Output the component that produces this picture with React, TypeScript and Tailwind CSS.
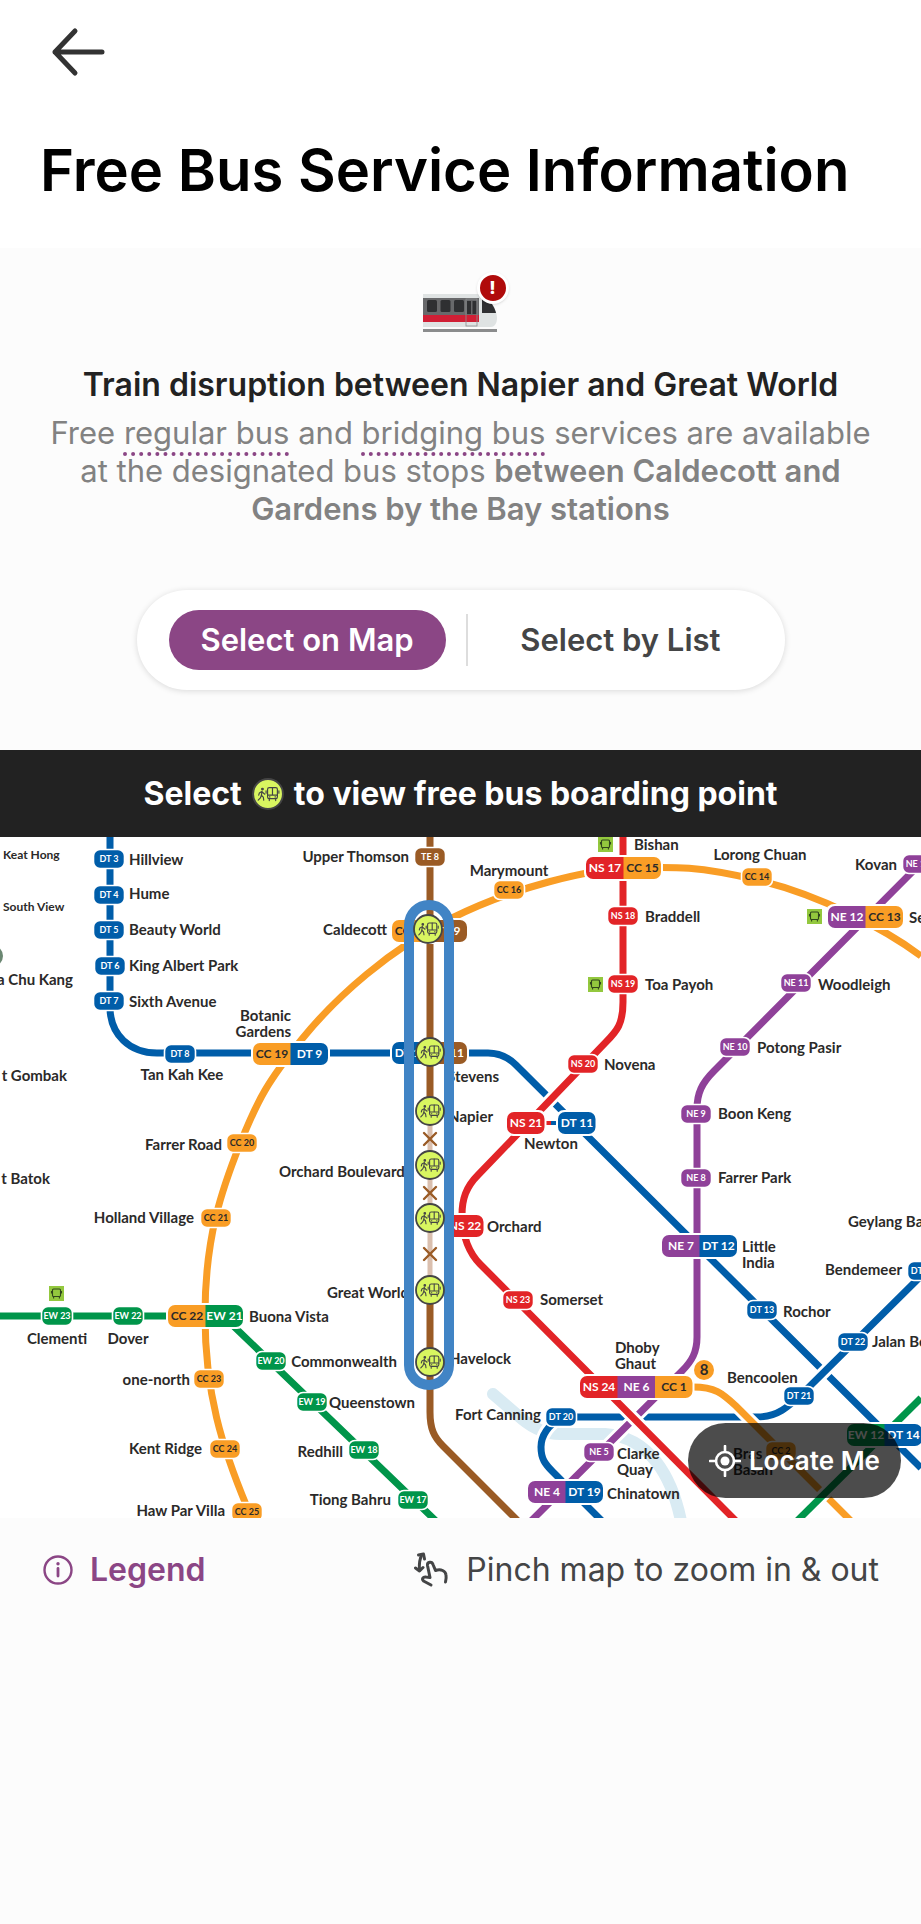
import { useState } from 'react';

const MAP_WIDTH = 921;
const MAP_HEIGHT = 681;

const BLUE = '#005da9';
const ORANGE = '#f99d25';
const GREEN = '#00954a';
const RED = '#e22427';
const PURPLE = '#8f4199';
const BROWN = '#9a5b25';
const DARK = '#2b2a29';

type Anchor = 'start' | 'middle' | 'end';

const lines = [
  { color: BLUE, d: 'M110 0 V170 C110 198 130 216 157 216 H488 C500 216 508 220 516 228 L921 631' },
  { color: BLUE, d: 'M921 439 L806 553 C790 568 779 580 757 580 H561 C546 590 541 600 541 610 C541 622 545 627 553 635 L602 684' },
  { color: GREEN, d: 'M0 479 H223 L436 684' },
  { color: ORANGE, d: 'M921 119 C885 92 820 58 757 43 S670 30 630 31 S514 50 452 81 S336 160 302 202 S258 262 240 307 S205 400 205 478 S222 610 247 670' },
  { color: ORANGE, d: 'M693 550 C715 550 722 556 736 569 L851 684' },
  { color: GREEN, d: 'M921 561 L797 684' },
  { color: PURPLE, d: 'M921 26 L714 234 C702 246 697 256 697 272 V500 C697 515 692 524 682 534 L530 685' },
  { color: RED, d: 'M623 0 V165 C623 187 617 194 606 205 L478 338 C466 350 462 362 462 378 C462 400 470 417 480 427 L737 685' },
  { color: BROWN, d: 'M430 0 V275' },
  { color: BROWN, d: 'M430 450 V575 C430 592 434 600 443 609 L518 684' },
];

const stations = [
  { x: 109, y: 22, code: 'DT 3', color: BLUE },
  { x: 109, y: 58, code: 'DT 4', color: BLUE },
  { x: 109, y: 93, code: 'DT 5', color: BLUE },
  { x: 110, y: 129, code: 'DT 6', color: BLUE },
  { x: 109, y: 164, code: 'DT 7', color: BLUE },
  { x: 180, y: 217, code: 'DT 8', color: BLUE },
  { x: 242, y: 306, code: 'CC 20', color: ORANGE },
  { x: 216, y: 381, code: 'CC 21', color: ORANGE },
  { x: 209, y: 542, code: 'CC 23', color: ORANGE },
  { x: 225, y: 612, code: 'CC 24', color: ORANGE },
  { x: 247, y: 675, code: 'CC 25', color: ORANGE },
  { x: 430, y: 20, code: 'TE 8', color: BROWN },
  { x: 509, y: 53, code: 'CC 16', color: ORANGE },
  { x: 757, y: 40, code: 'CC 14', color: ORANGE },
  { x: 781, y: 614, code: 'CC 2', color: ORANGE },
  { x: 623, y: 79, code: 'NS 18', color: RED },
  { x: 623, y: 147, code: 'NS 19', color: RED },
  { x: 583, y: 227, code: 'NS 20', color: RED },
  { x: 518, y: 463, code: 'NS 23', color: RED },
  { x: 918, y: 27, code: 'NE 13', color: PURPLE },
  { x: 796, y: 146, code: 'NE 11', color: PURPLE },
  { x: 735, y: 210, code: 'NE 10', color: PURPLE },
  { x: 696, y: 277, code: 'NE 9', color: PURPLE },
  { x: 696, y: 341, code: 'NE 8', color: PURPLE },
  { x: 599, y: 615, code: 'NE 5', color: PURPLE },
  { x: 57, y: 479, code: 'EW 23', color: GREEN },
  { x: 128, y: 479, code: 'EW 22', color: GREEN },
  { x: 271, y: 524, code: 'EW 20', color: GREEN },
  { x: 312, y: 565, code: 'EW 19', color: GREEN },
  { x: 364, y: 613, code: 'EW 18', color: GREEN },
  { x: 413, y: 663, code: 'EW 17', color: GREEN },
  { x: 561, y: 580, code: 'DT 20', color: BLUE },
  { x: 799, y: 559, code: 'DT 21', color: BLUE },
  { x: 853, y: 505, code: 'DT 22', color: BLUE },
  { x: 762, y: 473, code: 'DT 13', color: BLUE },
  { x: 923, y: 434, code: 'DT 23', color: BLUE },
];

// x is the left edge, every code takes 37.5 units of width
const interchanges = [
  { x: 253, y: 217, codes: [['CC 19', ORANGE], ['DT 9', BLUE]] },
  { x: 586, y: 31, codes: [['NS 17', RED], ['CC 15', ORANGE]] },
  { x: 828, y: 80, codes: [['NE 12', PURPLE], ['CC 13', ORANGE]] },
  { x: 392, y: 94, codes: [['CC 17', ORANGE], ['TE 9', BROWN]] },
  { x: 392, y: 216, codes: [['DT 10', BLUE], ['TE 11', BROWN]] },
  { x: 507, y: 286, codes: [['NS 21', RED]] },
  { x: 558, y: 286, codes: [['DT 11', BLUE]] },
  { x: 446, y: 389, codes: [['NS 22', RED]] },
  { x: 168, y: 479, codes: [['CC 22', ORANGE], ['EW 21', GREEN]] },
  { x: 662, y: 409, codes: [['NE 7', PURPLE], ['DT 12', BLUE]] },
  { x: 580, y: 550, codes: [['NS 24', RED], ['NE 6', PURPLE], ['CC 1', ORANGE]] },
  { x: 528, y: 655, codes: [['NE 4', PURPLE], ['DT 19', BLUE]] },
  { x: 847, y: 598, codes: [['EW 12', GREEN], ['DT 14', BLUE]] },
];

const names: { x: number; y: number; text: string[]; anchor?: Anchor }[] = [
  { x: 129, y: 28, text: ['Hillview'] },
  { x: 129, y: 62, text: ['Hume'] },
  { x: 129, y: 98, text: ['Beauty World'] },
  { x: 129, y: 134, text: ['King Albert Park'] },
  { x: 129, y: 170, text: ['Sixth Avenue'] },
  { x: 73, y: 148, text: ['a Chu Kang'], anchor: 'end' },
  { x: 67, y: 244, text: ['t Gombak'], anchor: 'end' },
  { x: 50, y: 347, text: ['t Batok'], anchor: 'end' },
  { x: 291, y: 184, text: ['Botanic', 'Gardens'], anchor: 'end' },
  { x: 182, y: 243, text: ['Tan Kah Kee'], anchor: 'middle' },
  { x: 222, y: 313, text: ['Farrer Road'], anchor: 'end' },
  { x: 194, y: 386, text: ['Holland Village'], anchor: 'end' },
  { x: 409, y: 25, text: ['Upper Thomson'], anchor: 'end' },
  { x: 387, y: 98, text: ['Caldecott'], anchor: 'end' },
  { x: 509, y: 39, text: ['Marymount'], anchor: 'middle' },
  { x: 499, y: 245, text: ['Stevens'], anchor: 'end' },
  { x: 493, y: 285, text: ['Napier'], anchor: 'end' },
  { x: 551, y: 312, text: ['Newton'], anchor: 'middle' },
  { x: 279, y: 340, text: ['Orchard Boulevard'] },
  { x: 634, y: 13, text: ['Bishan'] },
  { x: 760, y: 23, text: ['Lorong Chuan'], anchor: 'middle' },
  { x: 897, y: 33, text: ['Kovan'], anchor: 'end' },
  { x: 645, y: 85, text: ['Braddell'] },
  { x: 645, y: 153, text: ['Toa Payoh'] },
  { x: 604, y: 233, text: ['Novena'] },
  { x: 818, y: 153, text: ['Woodleigh'] },
  { x: 909, y: 86, text: ['Serangoon'] },
  { x: 757, y: 216, text: ['Potong Pasir'] },
  { x: 718, y: 282, text: ['Boon Keng'] },
  { x: 718, y: 346, text: ['Farrer Park'] },
  { x: 487, y: 395, text: ['Orchard'] },
  { x: 540, y: 468, text: ['Somerset'] },
  { x: 511, y: 527, text: ['Havelock'], anchor: 'end' },
  { x: 327, y: 461, text: ['Great World'] },
  { x: 249, y: 485, text: ['Buona Vista'] },
  { x: 397, y: 530, text: ['Commonwealth'], anchor: 'end' },
  { x: 329, y: 571, text: ['Queenstown'] },
  { x: 343, y: 620, text: ['Redhill'], anchor: 'end' },
  { x: 391, y: 668, text: ['Tiong Bahru'], anchor: 'end' },
  { x: 57, y: 507, text: ['Clementi'], anchor: 'middle' },
  { x: 128, y: 507, text: ['Dover'], anchor: 'middle' },
  { x: 190, y: 548, text: ['one-north'], anchor: 'end' },
  { x: 202, y: 617, text: ['Kent Ridge'], anchor: 'end' },
  { x: 225, y: 679, text: ['Haw Par Villa'], anchor: 'end' },
  { x: 541, y: 583, text: ['Fort Canning'], anchor: 'end' },
  { x: 615, y: 516, text: ['Dhoby', 'Ghaut'] },
  { x: 727, y: 546, text: ['Bencoolen'] },
  { x: 617, y: 622, text: ['Clarke', 'Quay'] },
  { x: 607, y: 662, text: ['Chinatown'] },
  { x: 733, y: 622, text: ['Bras', 'Basah'] },
  { x: 742, y: 415, text: ['Little', 'India'] },
  { x: 848, y: 390, text: ['Geylang Bahru'] },
  { x: 902, y: 438, text: ['Bendemeer'], anchor: 'end' },
  { x: 783, y: 480, text: ['Rochor'] },
  { x: 872, y: 510, text: ['Jalan Besar'] },
];

const boardingPoints = [
  { name: 'Caldecott', x: 428, y: 92 },
  { name: 'Stevens', x: 430, y: 215 },
  { name: 'Napier', x: 430, y: 274 },
  { name: 'Orchard Boulevard', x: 430, y: 328 },
  { name: 'Orchard', x: 430, y: 381 },
  { name: 'Great World', x: 430, y: 453 },
  { name: 'Havelock', x: 430, y: 525 },
];

const interchangeBuses = [
  { x: 598, y: 0 },
  { x: 588, y: 140 },
  { x: 807, y: 72 },
  { x: 49, y: 449 },
];

const BoardingIcon = ({ className }: { className: string }) => (
  <svg className={className} viewBox="0 0 30 30" fill="none" aria-hidden="true">
    <circle cx="15" cy="15" r="14" fill="#d9f660" stroke="#454545" strokeWidth="1.8" />
    <g stroke="#454545" strokeWidth="1.1" strokeLinecap="round" strokeLinejoin="round">
      <rect x="14.6" y="9" width="9.2" height="10.4" rx="1.6" />
      <path d="M14.6 16 H23.8 M19.2 9 V16 M16.2 19.600 V21.2 M22.2 19.600 V21.2 M13.2 12 V14.2 M25.2 12 V14.2 M16.4 17.7 H16.8 M21.600 17.7 H22" />
      <circle cx="9.8" cy="10.4" r="0.8" fill="#454545" />
      <path d="M9.4 12.6 L8.8 16.2 L10.6 18 L11 20.8 M8.8 16.2 L7.9 18.6 L5.8 20.8 M9.2 12.6 L6.9 14 L6.3 16 M9.8 13.4 L12 15.2" />
    </g>
  </svg>
);

const TrainIcon = () => (
  <svg className="h-16 w-24" viewBox="-2 0 96 64" fill="none" aria-hidden="true">
    <path d="M8 26 H64 C74 26 82 42 82 50 C82 56 79 59 76 59 H8 Z" fill="#dfe3e3" />
    <rect x="8" y="30" width="56" height="18" fill="#68696b" />
    <rect x="8" y="47" width="56" height="7" fill="#d01f35" />
    <g fill="#2f3032">
      <rect x="12" y="32" width="10" height="12" rx="1.5" />
      <rect x="25.500" y="32" width="10" height="12" rx="1.5" />
      <rect x="39" y="32" width="10" height="12" rx="1.5" />
      <rect x="52" y="33" width="4" height="13" />
      <rect x="57.500" y="33" width="4" height="13" />
      <path d="M67 31 H72 C77 34 80 41 81 45 H67 Z" />
    </g>
    <rect x="51" y="31" width="11" height="27" stroke="#8d8f91" strokeWidth="0.8" />
    <rect x="8" y="61" width="74" height="3" fill="#8b8c8d" />
  </svg>
);

const PinchIcon = () => (
  <svg className="h-10 w-9" viewBox="9 9 36 40" fill="none" stroke="#444546" strokeWidth="3" strokeLinecap="round" strokeLinejoin="round" aria-hidden="true">
    <path d="M17 13.500 C14.500 18 14 23 14.500 29" />
    <path d="M13.500 14 L18.500 13 L19.500 18" />
    <path d="M10.500 27 L14.500 30 L18 26.500" />
    <path d="M26 44 L18.500 40 C16.500 38 18 35.500 21 36 L25 36.500 L22.500 24.500 C22 20.500 27 20 28 23.500 L30.500 29.500 C36 27.500 40.500 30 41 34 C41.500 37 41 39 40.500 41" />
  </svg>
);

const StationLabel = ({ x, y, text, anchor = 'start' }: { x: number; y: number; text: string[]; anchor?: Anchor }) => (
  <text x={x} y={y} textAnchor={anchor}>
    {text.map((line, i) => (
      <tspan key={line} x={x} dy={i * 16}>
        {line}
      </tspan>
    ))}
  </text>
);

const TransitMap = () => (
  <svg
    className="block w-full font-[Lato,sans-serif] font-bold"
    viewBox={`0 0 ${MAP_WIDTH} ${MAP_HEIGHT}`}
    fill="none"
    role="img"
    aria-label="Train network map"
  >
    {/* River */}
    <path d="M493 557 L522 582 Q540 597 560 597 H605 C650 600 672 640 681 684" stroke="#d9ebf3" strokeWidth="12" strokeLinecap="round" />
    <circle cx="-8" cy="119" r="11" fill="#6b8772" />

    {/* Lines */}
    {lines.map((line) => (
      <g key={line.d}>
        <path d={line.d} stroke="#fff" strokeWidth="13" />
        <path d={line.d} stroke={line.color} strokeWidth="7" />
      </g>
    ))}
    <path d="M430 284 V444" stroke="#dabfae" strokeWidth="5" />
    <path d="M544 286 H551" stroke={RED} strokeWidth="4" />
    <path d="M551 286 H560" stroke={BLUE} strokeWidth="4" />
    {[302, 356, 417].map((y) => (
      <path key={y} d={`M424 ${y - 6} L436 ${y + 6} M436 ${y - 6} L424 ${y + 6}`} stroke={BROWN} strokeWidth="2.4" strokeLinecap="round" />
    ))}

    {/* Station names */}
    <g className="text-[15px]" fill={DARK}>
      {names.map((name) => (
        <StationLabel key={name.text[0] + name.x} {...name} />
      ))}
    </g>
    <g className="text-[12px]" fill={DARK}>
      <text x="3" y="22">Keat Hong</text>
      <text x="3" y="74">South View</text>
    </g>

    {/* Station codes */}
    <g className="text-[9px]" textAnchor="middle">
      {stations.map(({ x, y, code, color }) => (
        <g key={code}>
          <rect x={x - 15.5} y={y - 9.5} width="31" height="19" rx="6.5" fill={color} stroke="#fff" strokeWidth="1.6" />
          <text x={x} y={y + 3} fill={color === ORANGE ? DARK : '#fff'}>{code}</text>
        </g>
      ))}
    </g>
    <g className="text-[12px]" textAnchor="middle">
      {interchanges.map(({ x, y, codes }) => {
        const width = codes.length * 37.5;
        const id = `clip-${x}-${y}`;
        return (
          <g key={id}>
            <clipPath id={id}>
              <rect x={x} y={y - 11} width={width} height="22" rx="7" />
            </clipPath>
            <rect x={x - 2} y={y - 13} width={width + 4} height="26" rx="8" fill="#fff" />
            <g clipPath={`url(#${id})`}>
              {codes.map(([code, color], i) => (
                <rect key={code} x={x + i * 37.5} y={y - 11} width="38" height="22" fill={color} />
              ))}
            </g>
            {codes.map(([code, color], i) => (
              <text key={code} x={x + 19 + i * 37.5} y={y + 4} fill={color === ORANGE ? DARK : '#fff'}>{code}</text>
            ))}
          </g>
        );
      })}
    </g>
    <circle cx="704" cy="533" r="10" fill={ORANGE} />
    <text className="text-[15px]" x="704" y="538" textAnchor="middle" fill={DARK}>8</text>

    {/* Bus interchanges */}
    {interchangeBuses.map(({ x, y }) => (
      <g key={`${x}-${y}`} transform={`translate(${x} ${y})`}>
        <rect width="15" height="15" fill="#93c83e" />
        <rect x="3.500" y="3" width="8" height="7.500" rx="1" stroke="#31471c" strokeWidth="1.1" />
        <path d="M2.500 5 V7.500 M12.500 5 V7.500 M4.600 10.500 V12.500 M10.400 10.500 V12.500" stroke="#31471c" strokeWidth="1.1" />
      </g>
    ))}

    {/* Affected stretch */}
    <rect x="409" y="68" width="40" height="480" rx="20" stroke="#4184c5" strokeWidth="10" />
  </svg>
);

const App = () => {
  const [view, setView] = useState('map');
  const [selected, setSelected] = useState('');

  const tabClass = (name: string) =>
    view === name ? 'bg-[#8b4685] text-white' : 'text-[#444546]';

  return (
    <div className="min-h-screen bg-[#fcfcfc] font-[Inter,sans-serif] text-[#222222]">
      <header className="bg-white px-10 pt-6 pb-[46px]">
        <button type="button" aria-label="Back" className="block px-2">
          <svg className="h-14 w-16" viewBox="0 0 64 56" fill="none" stroke="#333333" strokeWidth="5" strokeLinecap="round" strokeLinejoin="round" aria-hidden="true">
            <path d="M54 28 H7 M27 7 L7 28 L27 49" />
          </svg>
        </button>
        <h1 className="mt-[58px] text-[58px] leading-16 font-semibold text-black">
          Free Bus Service Information
        </h1>
      </header>

      <section className="flex flex-col items-center px-8 pt-5 pb-15 text-center">
        <div className="relative">
          <TrainIcon />
          <span className="absolute top-1 right-0 flex size-8 items-center justify-center rounded-full border-3 border-white bg-[#b00b0b] text-lg font-extrabold text-white shadow">
            !
          </span>
        </div>
        <h2 className="mt-8 text-[32px] leading-[42px] font-semibold">
          Train disruption between Napier and Great World
        </h2>
        <p className="mt-2 text-[31px] leading-[38px] text-[#828282]">
          Free{' '}
          <a href="#regular-bus" className="underline decoration-[#8b4685] decoration-dotted decoration-4 underline-offset-8 [text-decoration-skip-ink:none]">
            regular bus
          </a>{' '}
          and{' '}
          <a href="#bridging-bus" className="underline decoration-[#8b4685] decoration-dotted decoration-4 underline-offset-8 [text-decoration-skip-ink:none]">
            bridging bus
          </a>{' '}
          services are available
          <br />
          at the designated bus stops <b className="font-semibold">between Caldecott and</b>
          <br />
          <b className="font-semibold">Gardens by the Bay stations</b>
        </p>

        <div className="mt-[62px] flex h-[100px] w-[648px] max-w-full items-center justify-between rounded-full bg-white px-8 text-[31px] font-semibold shadow-[0_1px_6px_rgba(0,0,0,0.14)]">
          <button type="button" onClick={() => setView('map')} className={`h-[60px] rounded-full px-8 ${tabClass('map')}`}>
            Select on Map
          </button>
          <div className="h-13 w-0.5 bg-[#dddddd]" />
          <button type="button" onClick={() => setView('list')} className={`h-[60px] rounded-full px-8 ${tabClass('list')}`}>
            Select by List
          </button>
        </div>
      </section>

      <div className="flex h-[87px] items-center justify-center gap-[10px] bg-[#222222] text-[32px] font-bold text-white">
        Select
        <BoardingIcon className="size-8" />
        to view free bus boarding point
      </div>

      <div className="relative overflow-hidden bg-white">
        <TransitMap />
        {boardingPoints.map(({ name, x, y }) => (
          <button
            key={name}
            type="button"
            aria-label={`Boarding point at ${name}`}
            aria-pressed={selected === name}
            onClick={() => setSelected(name)}
            className="absolute -translate-x-1/2 -translate-y-1/2 rounded-full"
            style={{ left: `${(x / MAP_WIDTH) * 100}%`, top: `${(y / MAP_HEIGHT) * 100}%` }}
          >
            <BoardingIcon className="size-[30px]" />
          </button>
        ))}
        <button type="button" className="absolute right-5 bottom-5 flex h-[75px] items-center gap-2 rounded-full bg-black/70 px-[21px] text-[26px] font-semibold text-white">
          <svg className="size-8" viewBox="0 0 32 32" fill="none" stroke="currentColor" strokeWidth="2.600" strokeLinecap="round" aria-hidden="true">
            <circle cx="16" cy="16" r="9" />
            <circle cx="16" cy="16" r="4.500" fill="currentColor" stroke="none" />
            <path d="M16 1 V6 M16 26 V31 M1 16 H6 M26 16 H31" />
          </svg>
          Locate Me
        </button>
      </div>

      <footer className="flex items-center justify-between px-[42px] py-8 text-[32px] leading-[38px]">
        <button type="button" className="flex items-center gap-4 font-semibold text-[#8b4685]">
          <svg className="size-8" viewBox="0 0 32 32" fill="none" stroke="currentColor" strokeWidth="2.400" strokeLinecap="round" aria-hidden="true">
            <circle cx="16" cy="16" r="13.500" />
            <path d="M16 14.500 V22" strokeWidth="2.800" />
            <circle cx="16" cy="9.800" r="1.700" fill="currentColor" stroke="none" />
          </svg>
          Legend
        </button>
        <p className="flex items-center gap-4 text-[#444546]">
          <PinchIcon />
          Pinch map to zoom in &amp; out
        </p>
      </footer>
    </div>
  );
};

export default App;
